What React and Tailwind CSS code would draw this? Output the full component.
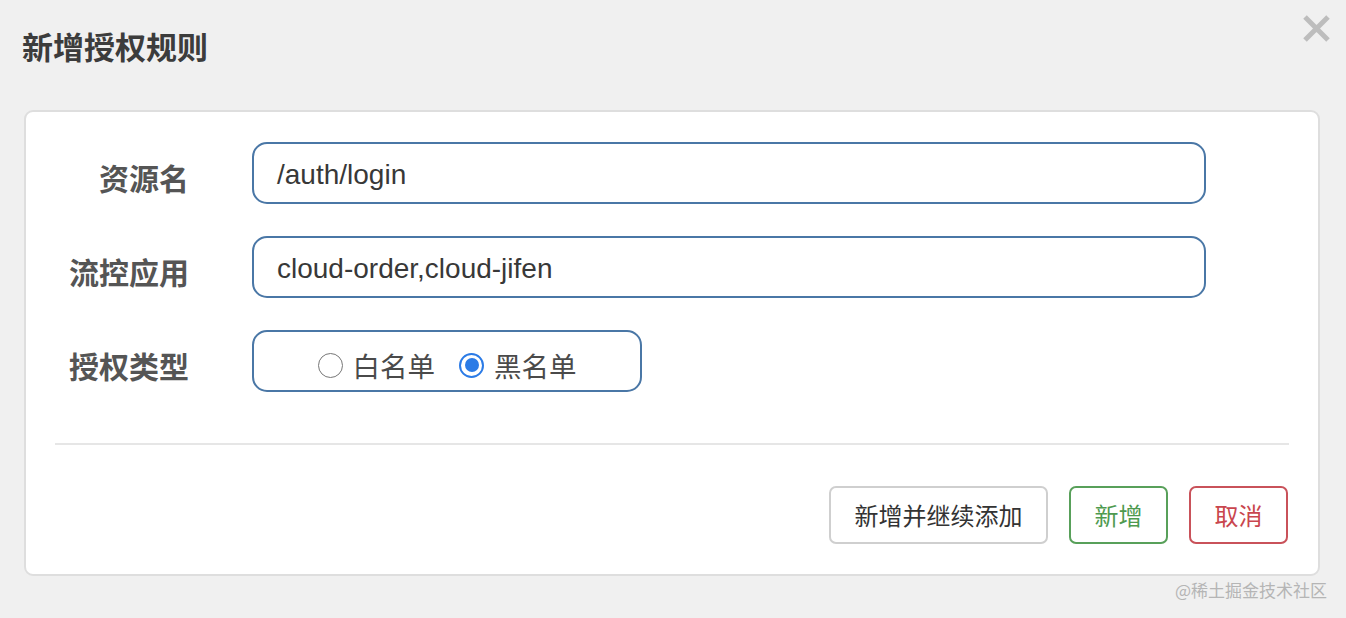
import React from "react";

function Radio({ checked, label }) {
  return (
    <div className="flex items-center">
      {checked ? (
        <div className="w-[25px] h-[25px] rounded-full border-[2.5px] border-[#2b7be6] bg-white flex items-center justify-center">
          <div className="w-[14px] h-[14px] rounded-full bg-[#2b7be6]" />
        </div>
      ) : (
        <div className="w-[25px] h-[25px] rounded-full border-[1.5px] border-[#777] bg-white" />
      )}
      <span className="ml-[10px] text-[27.5px] leading-[34px] text-[#4a4a4a]">{label}</span>
    </div>
  );
}

function Row({ label, children }) {
  return (
    <div className="flex items-center h-[62px]">
      <div className="w-[163px] pt-[7px] text-right text-[30px] leading-[36px] font-bold text-[#555]">{label}</div>
      <div className="ml-[63px] h-full flex">{children}</div>
    </div>
  );
}

export default function App() {
  return (
    <div className="relative w-[1346px] h-[618px] bg-[#f0f0f0] overflow-hidden font-['Noto_Sans_CJK_SC',sans-serif]">
      <div className="h-[92px] flex items-center pl-[22px]">
        <h1 className="text-[31px] leading-[40px] font-bold text-[#3c3c3c]">新增授权规则</h1>
      </div>
      <button className="absolute left-[1301px] top-[13px] w-[31px] h-[31px] flex items-center justify-center" aria-label="close">
        <svg width="31" height="31" viewBox="0 0 31 31">
          <path d="M4 4 L27 27 M27 4 L4 27" stroke="#bdbdbd" strokeWidth="5" strokeLinecap="butt" />
        </svg>
      </button>
      <div className="mt-[18px] ml-[24px] w-[1296px] h-[466px] bg-white border-2 border-[#dedede] rounded-[9px] pt-[30px]">
        <div className="flex flex-col gap-[32px]">
          <Row label="资源名">
            <div className="w-[954px] h-full border-2 border-[#4a77a6] rounded-[15px] flex items-center pl-[23px] pt-[3px] font-['Liberation_Sans','Noto_Sans_CJK_SC',sans-serif] text-[28px] text-[#383838]">
              /auth/login
            </div>
          </Row>
          <Row label="流控应用">
            <div className="w-[954px] h-full border-2 border-[#4a77a6] rounded-[15px] flex items-center pl-[23px] pt-[3px] font-['Liberation_Sans','Noto_Sans_CJK_SC',sans-serif] text-[28px] text-[#383838]">
              cloud-order,cloud-jifen
            </div>
          </Row>
          <Row label="授权类型">
            <div className="w-[390px] h-full border-2 border-[#4a77a6] rounded-[15px] flex items-center justify-center gap-[24px] pt-[8px]">
              <Radio checked={false} label="白名单" />
              <Radio checked={true} label="黑名单" />
            </div>
          </Row>
        </div>
        <div className="mt-[51px] mx-[29px] h-[2px] bg-[#e6e6e6]" />
        <div className="mt-[41px] pr-[30px] flex justify-end gap-[21px]">
          <button className="w-[219px] h-[58px] border-2 border-[#cfcfcf] rounded-[7px] bg-white text-[24px] text-[#333]">
            新增并继续添加
          </button>
          <button className="w-[99px] h-[58px] border-2 border-[#58a05a] rounded-[7px] bg-white text-[24px] text-[#4e9a4f]">
            新增
          </button>
          <button className="w-[99px] h-[58px] border-2 border-[#c9525a] rounded-[7px] bg-white text-[24px] text-[#c9464e]">
            取消
          </button>
        </div>
      </div>
      <div className="h-[28px] leading-[28px] text-right pr-[19px] text-[17px] text-[#b5b5b5]">@稀土掘金技术社区</div>
    </div>
  );
}
